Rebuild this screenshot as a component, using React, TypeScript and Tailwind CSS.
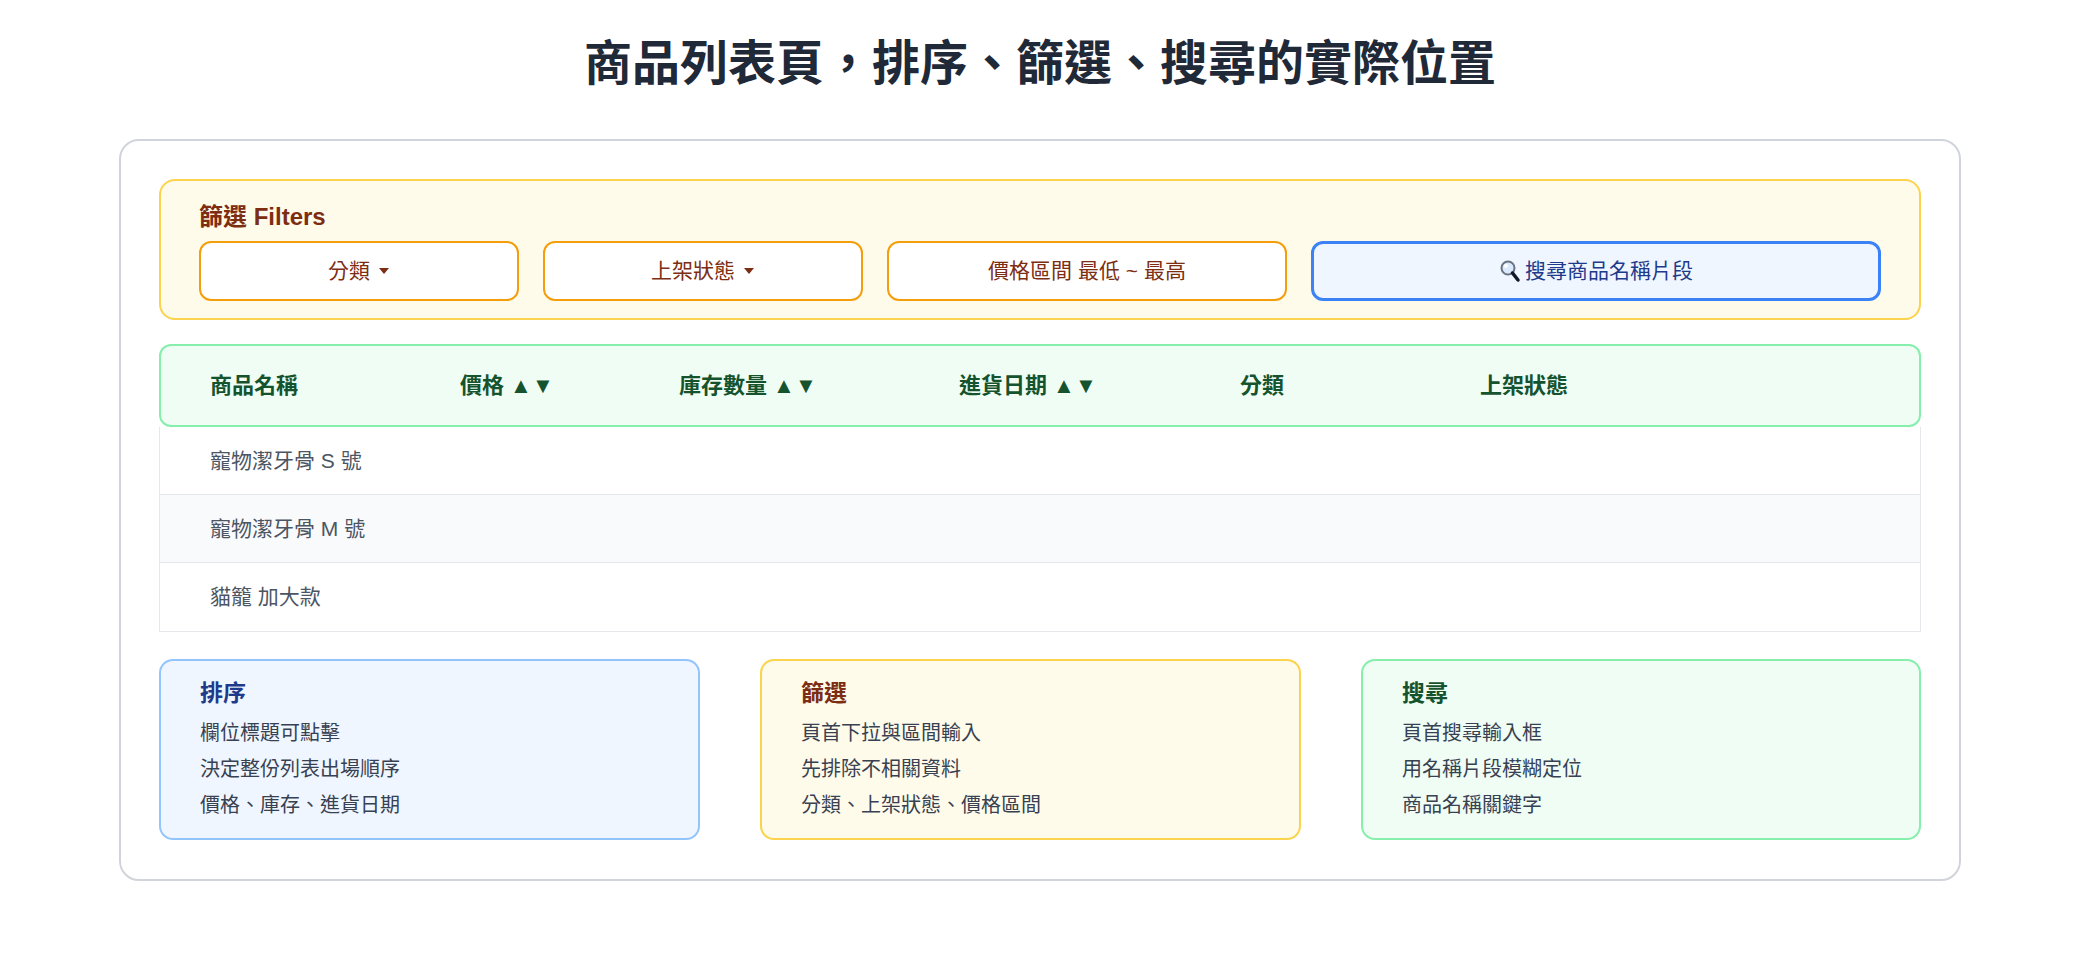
import React from "react";

const F = { fontFamily: '"Liberation Sans", "Noto Sans CJK TC", sans-serif' };

function Caret() {
  return (
    <svg width="12" height="8" viewBox="0 0 12 8" className="ml-2 inline-block">
      <path d="M1 1 L11 1 L6 7 Z" fill="#7c2d12" />
    </svg>
  );
}

function Mag() {
  return (
    <svg width="22" height="24" viewBox="0 0 22 24" className="mr-1">
      <circle cx="9" cy="9" r="6.5" fill="#dbeafe" stroke="#6b7280" strokeWidth="2" />
      <circle cx="7" cy="7" r="2" fill="#fff" />
      <path d="M13.5 14 L19 21" stroke="#111827" strokeWidth="3.5" strokeLinecap="round" />
    </svg>
  );
}

const cards = [
  { t: "排序", l: ["欄位標題可點擊", "決定整份列表出場順序", "價格、庫存、進貨日期"], box: "w-[541px] bg-[#eff6ff] border-[#93c5fd]", tc: "text-[#1e3a8a]" },
  { t: "篩選", l: ["頁首下拉與區間輸入", "先排除不相關資料", "分類、上架狀態、價格區間"], box: "w-[541px] bg-[#fffbeb] border-[#fcd34d]", tc: "text-[#7c2d12]" },
  { t: "搜尋", l: ["頁首搜尋輸入框", "用名稱片段模糊定位", "商品名稱關鍵字"], box: "w-[560px] bg-[#f0fdf4] border-[#86efac]", tc: "text-[#14532d]" },
];

export default function App() {
  return (
    <div style={F} className="w-[2080px] h-[960px] bg-white flex flex-col items-center">
      <h1 className="mt-[40px] h-[48px] text-[48px] leading-[48px] font-bold text-[#1f2937]">商品列表頁，排序、篩選、搜尋的實際位置</h1>
      <div className="mt-[51px] w-[1842px] h-[742px] border-2 border-[#d1d5db] rounded-[20px] p-[38px]">
        <div className="h-[141px] bg-[#fffbeb] border-2 border-[#fcd34d] rounded-[16px] px-[38px] pt-[20px]">
          <div className="text-[24px] leading-[32px] font-bold text-[#7c2d12]">篩選 Filters</div>
          <div className="mt-[8px] flex gap-6">
            <div className="w-[320px] h-[60px] border-2 border-[#f59e0b] rounded-[12px] bg-white flex items-center justify-center text-[21px] text-[#7c2d12]">分類<Caret /></div>
            <div className="w-[320px] h-[60px] border-2 border-[#f59e0b] rounded-[12px] bg-white flex items-center justify-center text-[21px] text-[#7c2d12]">上架狀態<Caret /></div>
            <div className="w-[400px] h-[60px] border-2 border-[#f59e0b] rounded-[12px] bg-white flex items-center justify-center text-[21px] text-[#7c2d12]">價格區間 最低 ~ 最高</div>
            <div className="w-[570px] h-[60px] border-[3px] border-[#3b82f6] rounded-[12px] bg-[#eff6ff] flex items-center justify-center text-[21px] text-[#1e3a8a]"><Mag />搜尋商品名稱片段</div>
          </div>
        </div>
        <div className="mt-[24px] h-[83px] bg-[#f0fdf4] border-2 border-[#86efac] rounded-[12px] flex items-center pl-[49px] text-[22px] font-bold text-[#14532d]">
          <div className="w-[250px]">商品名稱</div>
          <div className="w-[219px]">價格 ▲▼</div>
          <div className="w-[280px]">庫存數量 ▲▼</div>
          <div className="w-[281px]">進貨日期 ▲▼</div>
          <div className="w-[240px]">分類</div>
          <div>上架狀態</div>
        </div>
        <div className="border border-t-0 border-[#e5e7eb] text-[21px] text-[#4b5563]">
          <div className="h-[68px] flex items-center pl-[50px] border-b border-[#e5e7eb] bg-white">寵物潔牙骨 S 號</div>
          <div className="h-[68px] flex items-center pl-[50px] border-b border-[#e5e7eb] bg-[#f9fafb]">寵物潔牙骨 M 號</div>
          <div className="h-[68px] flex items-center pl-[50px] bg-white">貓籠 加大款</div>
        </div>
        <div className="mt-[27px] flex gap-[60px]">
          {cards.map((c) => (
            <div key={c.t} className={`h-[181px] border-2 rounded-[14px] px-[39px] pt-[16px] ${c.box}`}>
              <div className={`text-[23px] leading-[32px] font-bold ${c.tc}`}>{c.t}</div>
              <div className="mt-[6px] text-[20px] leading-[36px] text-[#374151]">
                {c.l.map((x) => <div key={x}>{x}</div>)}
              </div>
            </div>
          ))}
        </div>
      </div>
    </div>
  );
}
